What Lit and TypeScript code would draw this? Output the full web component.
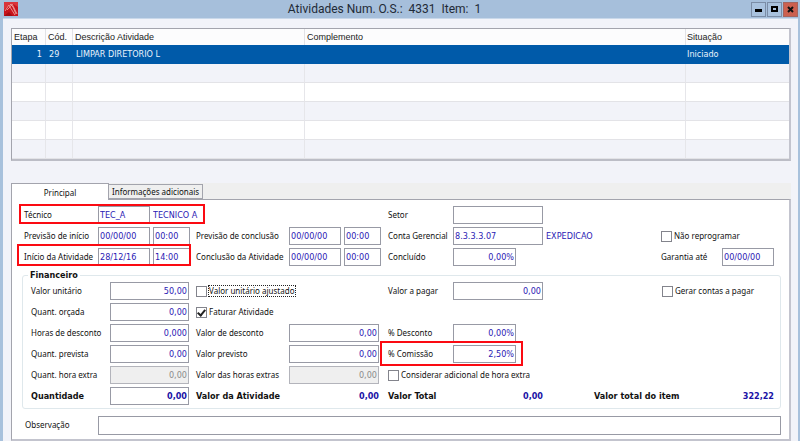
import { LitElement, html, css, svg } from "lit";
import { customElement, property } from "lit/decorators.js";
import { classMap } from "lit/directives/class-map.js";

const fieldStyles = css`
  *,
  *::before,
  *::after {
    box-sizing: border-box;
  }
  label,
  .label {
    white-space: nowrap;
    line-height: 18px;
  }
  input {
    margin: 0;
    font: inherit;
    border-radius: 0;
    outline: none;
  }
  input.text {
    flex: none;
    height: 18px;
    min-width: 0;
    padding: 0 1px;
    color: #2a20b4;
    background: #fff;
    border: 1px solid #989aa5;
    font-family: "DejaVu Sans Condensed", "DejaVu Sans", sans-serif;
    font-size: 9px;
  }
  input.text.plain {
    border-color: transparent;
    background: transparent;
    padding: 0;
  }
  input.text.num {
    text-align: right;
  }
  input.text:disabled {
    background: #efefef;
    color: #8b8b8b;
    border-color: #b3b4bb;
  }
`;

interface Activity {
  step: string;
  code: string;
  description: string;
  complement: string;
  status: string;
}

@customElement("activity-table")
export class ActivityTable extends LitElement {
  @property({ attribute: false }) rows: Activity[] = [];
  @property({ type: Number }) size = 6;

  static styles = css`
    :host {
      display: block;
    }
    table,
    th,
    td {
      box-sizing: border-box;
    }
    table {
      width: 100%;
      table-layout: fixed;
      border-collapse: separate;
      border-spacing: 0;
      border: 1px solid #a3a4ad;
      border-right: 2px solid #c3c4ce;
      border-bottom: 2px solid #bcbdc6;
      background: #fff;
    }
    .c-step {
      width: 34px;
    }
    .c-code {
      width: 27px;
    }
    .c-desc {
      width: 232px;
    }
    .c-status {
      width: 103px;
    }
    th {
      height: 16px;
      padding: 0 2px;
      font: 9px/16px "Liberation Sans", sans-serif;
      text-align: left;
      color: #222;
      background: #fcfcfd;
      border-right: 1px solid #e2e2e6;
      white-space: nowrap;
    }
    td {
      height: 19px;
      padding: 0 3px;
      font: 9px/18px "DejaVu Sans Condensed", "DejaVu Sans", sans-serif;
      border-right: 1px solid #e6e6ea;
      border-bottom: 1px solid #e3e3e7;
      white-space: nowrap;
    }
    th:last-child,
    td:last-child {
      border-right: 0;
      padding-left: 1px;
    }
    .step {
      text-align: right;
    }
    tbody tr:nth-child(odd) td {
      background: #fff;
    }
    tbody tr:nth-child(even) td {
      background: #f2f3f9;
    }
    tbody tr.selected td {
      background: #005aa9;
      border-color: #005aa9;
      color: #eaf3fc;
    }
  `;

  render() {
    const blanks = Array.from({ length: this.size - this.rows.length });
    return html`<table>
      <colgroup>
        <col class="c-step" />
        <col class="c-code" />
        <col class="c-desc" />
        <col />
        <col class="c-status" />
      </colgroup>
      <thead>
        <tr>
          <th>Etapa</th>
          <th>Cód.</th>
          <th>Descrição Atividade</th>
          <th>Complemento</th>
          <th>Situação</th>
        </tr>
      </thead>
      <tbody>
        ${this.rows.map(
          (r) => html`<tr class="selected">
            <td class="step">${r.step}</td>
            <td>${r.code}</td>
            <td>${r.description}</td>
            <td>${r.complement}</td>
            <td>${r.status}</td>
          </tr>`
        )}
        ${blanks.map(
          (_, i) => html`<tr class=${classMap({ shaded: i % 2 === 0 })}>
            <td></td>
            <td></td>
            <td></td>
            <td></td>
            <td></td>
          </tr>`
        )}
      </tbody>
    </table>`;
  }
}

@customElement("check-field")
export class CheckField extends LitElement {
  @property() text = "";
  @property({ type: Boolean }) checked = false;
  @property({ type: Boolean }) focused = false;

  static styles = [
    fieldStyles,
    css`
      :host {
        display: flex;
      }
      label {
        display: flex;
        align-items: center;
        gap: 1px;
        height: 18px;
      }
      input {
        position: relative;
        appearance: none;
        flex: none;
        width: 11px;
        height: 11px;
        background: #fff;
        border: 1px solid #83848c;
      }
      input:checked::after {
        content: "";
        position: absolute;
        left: 2px;
        top: 0;
        width: 5px;
        height: 8px;
        border: solid #222;
        border-width: 0 2px 2px 0;
        transform: rotate(40deg);
      }
      .text {
        line-height: 10px;
        border: 1px solid transparent;
      }
      .text.focused {
        border: 1px dotted #222;
      }
    `,
  ];

  render() {
    return html`<label>
      <input type="checkbox" .checked=${this.checked} />
      <span class=${classMap({ text: true, focused: this.focused })}>${this.text}</span>
    </label>`;
  }
}

@customElement("app-root")
export class AppRoot extends LitElement {
  private activities: Activity[] = [
    { step: "1", code: "29", description: "LIMPAR DIRETORIO L", complement: "", status: "Iniciado" },
  ];

  static styles = [
    fieldStyles,
    css`
      :host {
        display: block;
        min-height: 100vh;
        background: #f2f3f9;
        border: solid #a8c1dc;
        border-width: 0 2px 0 3px;
        box-sizing: border-box;
        font-family: "Noto Sans", sans-serif;
        font-size: 8px;
        color: #111;
      }
      header {
        display: grid;
        grid-template-columns: 1fr auto 1fr;
        align-items: center;
        height: 19px;
        background: #a6bfdb;
        border-bottom: 1px solid #c9d8ea;
      }
      header svg {
        display: block;
      }
      .logo {
        margin-left: 1px;
      }
      h1 {
        margin: 0;
        padding-right: 32px;
        font: 12px/18px Roboto, sans-serif;
        white-space: pre;
        color: #1f2a36;
      }
      .buttons {
        display: flex;
        justify-content: flex-end;
        gap: 1px;
      }
      .buttons button {
        display: grid;
        place-items: center;
        width: 15px;
        height: 15px;
        padding: 0;
        border: 1px solid #7b8da6;
        background: #a9c2de;
      }
      .buttons .close {
        background: #cc604f;
        border-color: #a4655f;
      }
      main {
        padding: 9px 7px 0 8px;
      }
      .tabs {
        display: flex;
        align-items: flex-end;
        height: 16px;
        margin-top: 22px;
        background: #efefef;
      }
      .tabs button {
        height: 15px;
        padding: 0 3px;
        border: 1px solid #a3a4ad;
        border-left: 0;
        background: #efefef;
        font: inherit;
        color: #111;
      }
      .tabs .active {
        z-index: 1;
        width: 98px;
        height: 17px;
        margin-bottom: -1px;
        border: 1px solid #a3a4ad;
        border-bottom: 0;
        background: #fff;
      }
      .panel {
        padding: 6px 8px 4px 10px;
        background: #fff;
        border: 1px solid #a3a4ad;
        border-right: 2px solid #c3c4ce;
        border-bottom: 2px solid #c3c4ce;
      }
      .grid {
        display: grid;
        grid-auto-rows: 21px;
        align-items: start;
      }
      .top {
        grid-template-columns: 74px 98px 93px 99px 65px 1fr 61px 52px;
        padding: 0 7px 0 2px;
      }
      .money {
        grid-template-columns: 79px 86px 93px 99px 65px 1fr 112px;
      }
      .pair {
        display: flex;
        gap: 3px;
      }
      .w-date {
        width: 52px;
      }
      .w-time {
        width: 37px;
      }
      .w-name {
        width: 53px;
      }
      input.text.w-name {
        border-width: 1px 0;
      }
      .w-qty {
        width: 79px;
      }
      .w-money,
      .total {
        width: 90px;
      }
      .w-pct {
        width: 63px;
      }
      .from3 {
        grid-column: 3 / span 2;
      }
      .from5 {
        grid-column: 5 / span 2;
      }
      .setor {
        grid-column: 5;
      }
      .from7 {
        grid-column: 7 / -1;
      }
      .col1 {
        grid-column: 1;
      }
      .blue {
        color: #2a20b4;
        font: 9px/18px "DejaVu Sans Condensed", "DejaVu Sans", sans-serif;
      }
      .bold,
      input.text.bold {
        font-family: "DejaVu Sans Condensed", "DejaVu Sans", sans-serif;
        font-weight: bold;
        font-size: 9px;
        color: #111;
      }
      input.text.bold,
      output.bold {
        color: #1a12a6;
      }
      output {
        line-height: 18px;
        text-align: right;
      }
      fieldset {
        min-width: 0;
        margin: 0;
        padding: 1px 6px 0 8px;
        border: 1px solid #dfe8ec;
        border-radius: 3px;
      }
      legend {
        margin-left: -3px;
        padding: 0 2px;
        line-height: 12px;
      }
      .sums {
        grid-column: 6 / -1;
        display: flex;
        justify-content: space-between;
      }
      .grand {
        display: flex;
        justify-content: space-between;
        width: 180px;
      }
      .notes {
        display: grid;
        grid-template-columns: 73px 1fr;
        margin-top: 7px;
        padding-left: 3px;
      }
      .notes input.text {
        height: 19px;
      }
      .marked {
        position: relative;
      }
      .marked::after {
        content: "";
        position: absolute;
        z-index: 2;
        border: 2px solid #fb0a12;
        pointer-events: none;
      }
      .m-tech::after {
        left: -5px;
        top: -2px;
        width: 186px;
        height: 20px;
      }
      .m-start::after {
        left: -7px;
        top: -4px;
        width: 174px;
        height: 22px;
      }
      .m-pct::after {
        left: -8px;
        top: -4px;
        width: 143px;
        height: 25px;
      }
    `,
  ];

  private input(id: string, value: string, kind: string, disabled = false, label = "") {
    return html`<input
      id=${id}
      type="text"
      class="text ${kind}"
      .value=${value}
      ?disabled=${disabled}
      aria-label=${label || id}
    />`;
  }

  private logo() {
    return svg`<svg class="logo" width="14" height="14" viewBox="0 0 14 14" aria-hidden="true">
      <rect width="14" height="14" fill="#c8141c" />
      <path d="M0 0h14v5L9 2 4 4 0 8z" fill="#d9343a" />
      <path d="M1 9l4-6 1 2 2-3 5 10M3 8l3-3 5 8M6 2l3 3 3 7" fill="none" stroke="#f3a9a6" stroke-width=".8" />
      <path d="M0 14l5-4 4 4z" fill="#a50c12" />
    </svg>`;
  }

  render() {
    return html`
      <header>
        ${this.logo()}
        <h1>Atividades Num. O.S.:  4331  Item:  1</h1>
        <div class="buttons">
          <button aria-label="Minimizar">
            <svg width="9" height="9"><path d="M1 4h7v3H1z" fill="#000" /></svg>
          </button>
          <button aria-label="Maximizar">
            <svg width="9" height="9"><path d="M1 1h7v6H1zM3 3v2h3V3z" fill="#000" fill-rule="evenodd" /></svg>
          </button>
          <button class="close" aria-label="Fechar">
            <svg width="9" height="9"><path d="M2 2l5 5M7 2L2 7" stroke="#111" stroke-width="2" /></svg>
          </button>
        </div>
      </header>
      <main>
        <activity-table .rows=${this.activities}></activity-table>
        <div class="tabs" role="tablist">
          <button class="active" role="tab" aria-selected="true">Principal</button>
          <button role="tab" aria-selected="false">Informações adicionais</button>
        </div>
        <section class="panel">
          <div class="grid top">
            <label for="tec" class="marked m-tech">Técnico</label>
            <div class="pair">
              ${this.input("tec", "TEC_A", "w-date")}
              ${this.input("tecnome", "TECNICO A", "w-name plain", false, "Nome do técnico")}
            </div>
            <label for="setor" class="setor">Setor</label>
            ${this.input("setor", "", "w-money")}

            <label for="pini" class="col1">Previsão de início</label>
            <div class="pair">
              ${this.input("pini", "00/00/00", "w-date")} ${this.input("pinih", "00:00", "w-time")}
            </div>
            <label for="pcon">Previsão de conclusão</label>
            <div class="pair">
              ${this.input("pcon", "00/00/00", "w-date")} ${this.input("pconh", "00:00", "w-time")}
            </div>
            <label for="conta">Conta Gerencial</label>
            <div class="pair">
              ${this.input("conta", "8.3.3.3.07", "w-money")}
              <span class="blue">EXPEDICAO</span>
            </div>
            <check-field class="from7" text="Não reprogramar"></check-field>

            <label for="ini" class="marked m-start">Início da Atividade</label>
            <div class="pair">
              ${this.input("ini", "28/12/16", "w-date")} ${this.input("inih", "14:00", "w-time")}
            </div>
            <label for="con">Conclusão da Atividade</label>
            <div class="pair">
              ${this.input("con", "00/00/00", "w-date")} ${this.input("conh", "00:00", "w-time")}
            </div>
            <label for="pct">Concluído</label>
            ${this.input("pct", "0,00%", "w-pct num")}
            <label for="gar">Garantia até</label>
            ${this.input("gar", "00/00/00", "w-date")}
          </div>

          <fieldset>
            <legend class="bold">Financeiro</legend>
            <div class="grid money">
              <label for="vu">Valor unitário</label>
              ${this.input("vu", "50,00", "w-qty num")}
              <check-field class="from3" text="Valor unitário ajustado" focused></check-field>
              <label for="vp">Valor a pagar</label>
              ${this.input("vp", "0,00", "w-money num")}
              <check-field class="from7" text="Gerar contas a pagar"></check-field>

              <label for="qo">Quant. orçada</label>
              ${this.input("qo", "0,00", "w-qty num")}
              <check-field class="from3" text="Faturar Atividade" checked></check-field>

              <label for="hd" class="col1">Horas de desconto</label>
              ${this.input("hd", "0,000", "w-qty num")}
              <label for="vd">Valor de desconto</label>
              ${this.input("vd", "0,00", "w-money num")}
              <label for="pd">% Desconto</label>
              ${this.input("pd", "0,00%", "w-pct num")}

              <label for="qp" class="col1">Quant. prevista</label>
              ${this.input("qp", "0,00", "w-qty num")}
              <label for="vpr">Valor previsto</label>
              ${this.input("vpr", "0,00", "w-money num")}
              <label for="com" class="marked m-pct">% Comissão</label>
              ${this.input("com", "2,50%", "w-pct num")}

              <label for="qh" class="col1">Quant. hora extra</label>
              ${this.input("qh", "0,00", "w-qty num", true)}
              <label for="vh">Valor das horas extras</label>
              ${this.input("vh", "0,00", "w-money num", true)}
              <check-field class="from5" text="Considerar adicional de hora extra"></check-field>

              <label for="qt" class="col1 bold">Quantidade</label>
              ${this.input("qt", "0,00", "w-qty num bold")}
              <span class="label bold">Valor da Atividade</span>
              <output class="bold total">0,00</output>
              <span class="label bold">Valor Total</span>
              <div class="sums">
                <output class="bold total">0,00</output>
                <div class="grand">
                  <span class="label bold">Valor total do item</span>
                  <output class="bold">322,22</output>
                </div>
              </div>
            </div>
          </fieldset>

          <div class="notes">
            <label for="obs">Observação</label>
            ${this.input("obs", "", "")}
          </div>
        </section>
      </main>
    `;
  }
}
